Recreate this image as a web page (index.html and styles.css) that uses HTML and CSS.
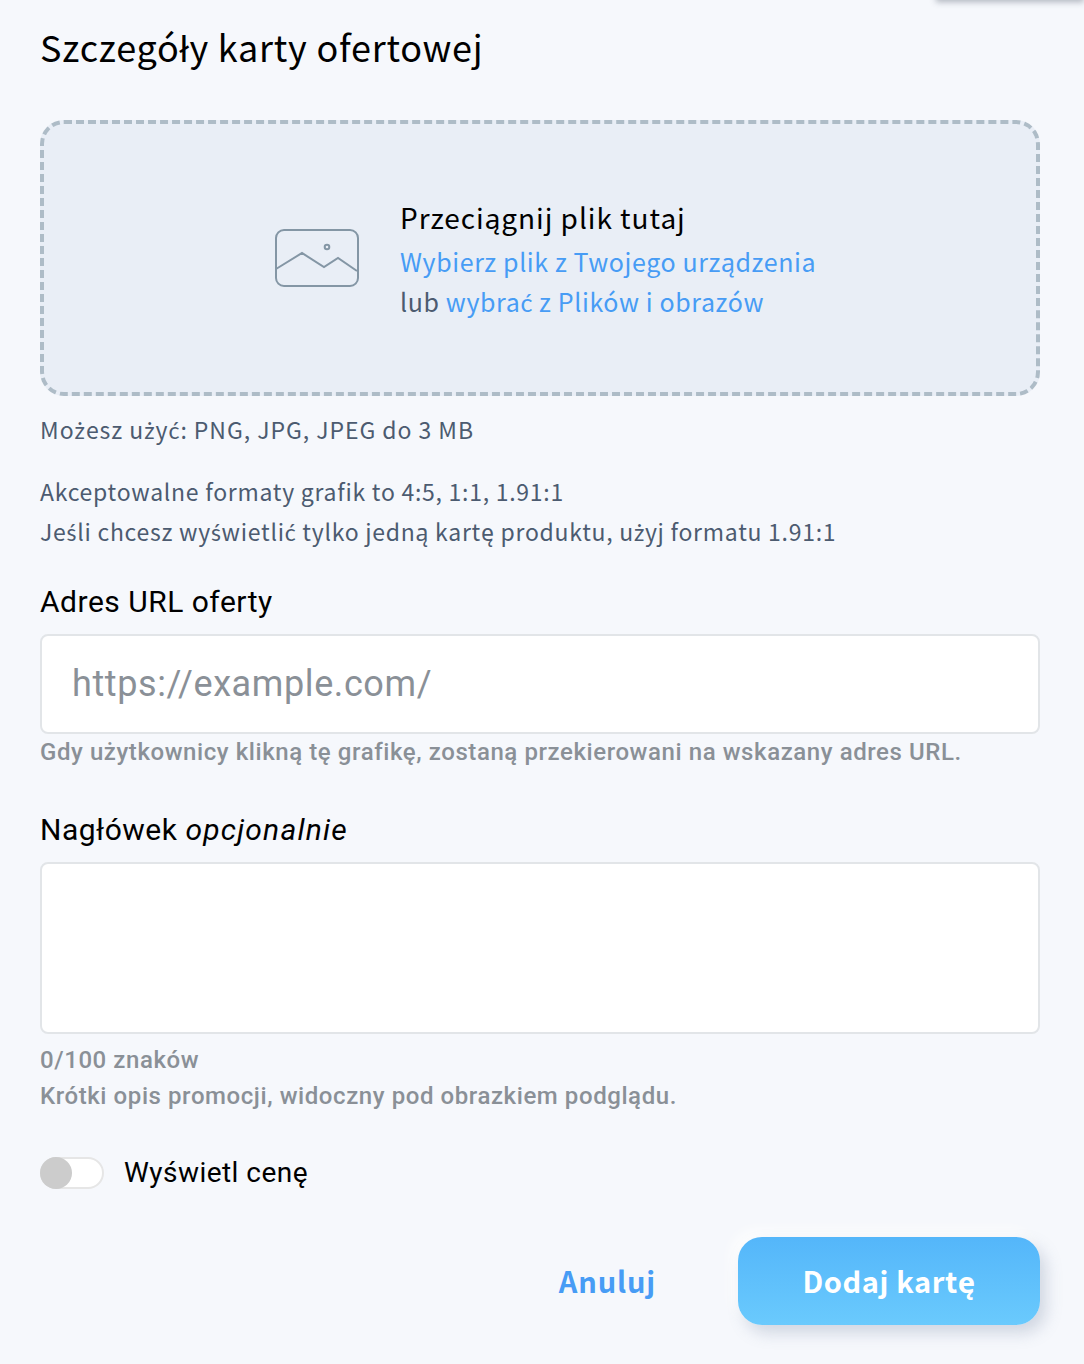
FILE: index.html
```html
<!DOCTYPE html>
<html lang="pl">
<head>
<meta charset="utf-8">
<title>Szczegóły karty ofertowej</title>
<link rel="stylesheet" href="styles.css">
</head>
<body>
<div class="corner-shadow"></div>
<main class="page">
  <h1 class="title">Szczegóły karty ofertowej</h1>
  <section class="dropzone">
    <svg class="drop-icon" width="86" height="60" viewBox="0 0 86 60" fill="none" stroke="#8496a5" stroke-width="2">
      <rect x="2" y="2" width="82" height="56" rx="8"/>
      <path d="M2 41 L28 25 L50 39 L64 30 L83 43"/>
      <circle cx="53" cy="19" r="2.3"/>
    </svg>
    <div class="drop-text">
      <div class="drop-title">Przeciągnij plik tutaj</div>
      <div class="drop-line"><a class="link">Wybierz plik z Twojego urządzenia</a></div>
      <div class="drop-line">lub <a class="link">wybra<span class="pl">ć</span> z Plików i obrazów</a></div>
    </div>
  </section>
  <p class="note note-first">Mo<span class="pl">ż</span>esz u<span class="pl">ż</span>y<span class="pl">ć</span>: PNG, JPG, JPEG do 3 MB</p>
  <p class="note note-group">Akceptowalne formaty grafik to 4:5, 1:1, 1.91:1<br>Je<span class="pl">ś</span>li chcesz wy<span class="pl">ś</span>wietli<span class="pl">ć</span> tylko jedną kartę produktu, u<span class="pl">ż</span>yj formatu 1.91:1</p>

  <label class="label label-url">Adres URL oferty</label>
  <div class="input input-url"><span class="placeholder">https://example.com/</span></div>
  <p class="hint hint-url">Gdy użytkownicy klikną tę grafikę, zostaną przekierowani na wskazany adres URL.</p>

  <label class="label label-head">Nagłówek <em>opcjonalnie</em></label>
  <div class="input input-area"></div>
  <p class="hint hint-count">0/100 znaków</p>
  <p class="hint hint-desc">Krótki opis promocji, widoczny pod obrazkiem podglądu.</p>

  <div class="toggle-row">
    <span class="toggle"><span class="knob"></span></span>
    <span class="toggle-label">Wyświetl cenę</span>
  </div>

  <div class="actions">
    <a class="cancel">Anuluj</a>
    <a class="submit">Dodaj kartę</a>
  </div>
</main>
</body>
</html>
```
FILE: styles.css
```css
* { box-sizing: border-box; }
html, body { margin: 0; height: 100%; }
body {
  background: #f6f8fc;
  font-family: "Noto Sans CJK JP", "Noto Sans", sans-serif;
  overflow: hidden;
  position: relative;
}
.pl { font-family: Lato, "Noto Sans", sans-serif; }
.corner-shadow {
  position: absolute;
  top: -10px;
  left: 936px;
  width: 148px;
  height: 10px;
  background: #fff;
  box-shadow: 0 2px 6px rgba(60, 70, 90, .38);
}
.page { padding: 0 44px 0 40px; }
.title {
  margin: 0;
  padding-top: 22px;
  height: 120px;
  font-size: 36px;
  line-height: 48px;
  font-weight: 400;
  letter-spacing: .74px;
  color: #000;
}
.dropzone {
  height: 276px;
  display: flex;
  align-items: center;
  padding-left: 230px;
  gap: 40px;
  background: #e9eef6;
  border: 4px dashed #aebcc7;
  border-radius: 24px;
}
.drop-icon { flex: none; margin-top: -1px; }
.drop-text { font-size: 25px; line-height: 40px; letter-spacing: .6px; color: #4c5b70; }
.drop-title { color: #000; font-size: 28px; line-height: 44px; letter-spacing: .95px; margin-top: -2px; }
.drop-line { position: relative; top: 2px; }
.link { color: #479cf5; }
.note {
  margin: 0;
  font-size: 23px;
  line-height: 40px;
  letter-spacing: .73px;
  color: #4c5b70;
}
.note-first { margin-top: 13px; letter-spacing: .95px; }
.note-group { margin-top: 21px; }
.label {
  display: block;
  font-family: Roboto, sans-serif;
  font-size: 30px;
  line-height: 40px;
  letter-spacing: .5px;
  color: #000;
}
.label em { font-style: italic; letter-spacing: 1.2px; }
.label-url { margin-top: 30px; }
.label-head { margin-top: 40px; }
.input {
  margin-top: 12px;
  background: #fff;
  border: 2px solid #e2e5e8;
  border-radius: 8px;
}
.input-url {
  height: 100px;
  display: flex;
  align-items: center;
  padding-left: 30px;
}
.input-area { height: 172px; }
.placeholder {
  font-family: Roboto, sans-serif;
  font-size: 36px;
  color: #8a9097;
  letter-spacing: .6px;
}
.hint {
  margin: 0;
  font-family: Roboto, sans-serif;
  font-size: 24px;
  line-height: 36px;
  font-weight: 500;
  letter-spacing: .58px;
  color: #8a9097;
}
.hint-url { margin-top: 0; }
.hint-count { margin-top: 8px; }
.toggle-row { display: flex; align-items: center; gap: 20px; margin-top: 43px; }
.toggle {
  width: 64px;
  height: 32px;
  background: #fff;
  border: 2px solid #e6e6e6;
  border-radius: 16px;
  position: relative;
}
.knob {
  position: absolute;
  left: -2px;
  top: -2px;
  width: 32px;
  height: 32px;
  background: #cccccc;
  border-radius: 50%;
}
.toggle-label { font-family: Roboto, sans-serif; font-size: 28px; line-height: 32px; letter-spacing: .46px; color: #000; }
.actions {
  display: flex;
  justify-content: flex-end;
  align-items: center;
  gap: 83px;
  margin-top: 48px;
}
.cancel { color: #479cf5; font-size: 29px; font-weight: 700; letter-spacing: .85px; padding-bottom: 2px; margin-right: -1px; }
.submit {
  width: 302px;
  height: 88px;
  display: flex;
  align-items: center;
  justify-content: center;
  padding-bottom: 3px;
  color: #fff;
  font-size: 29px;
  font-weight: 700;
  letter-spacing: .6px;
  border-radius: 24px;
  background: linear-gradient(180deg, #54b6fa, #6acafd);
  box-shadow: 6px 8px 16px rgba(120, 135, 165, .3), -6px -6px 14px rgba(255, 255, 255, .9);
}
```
